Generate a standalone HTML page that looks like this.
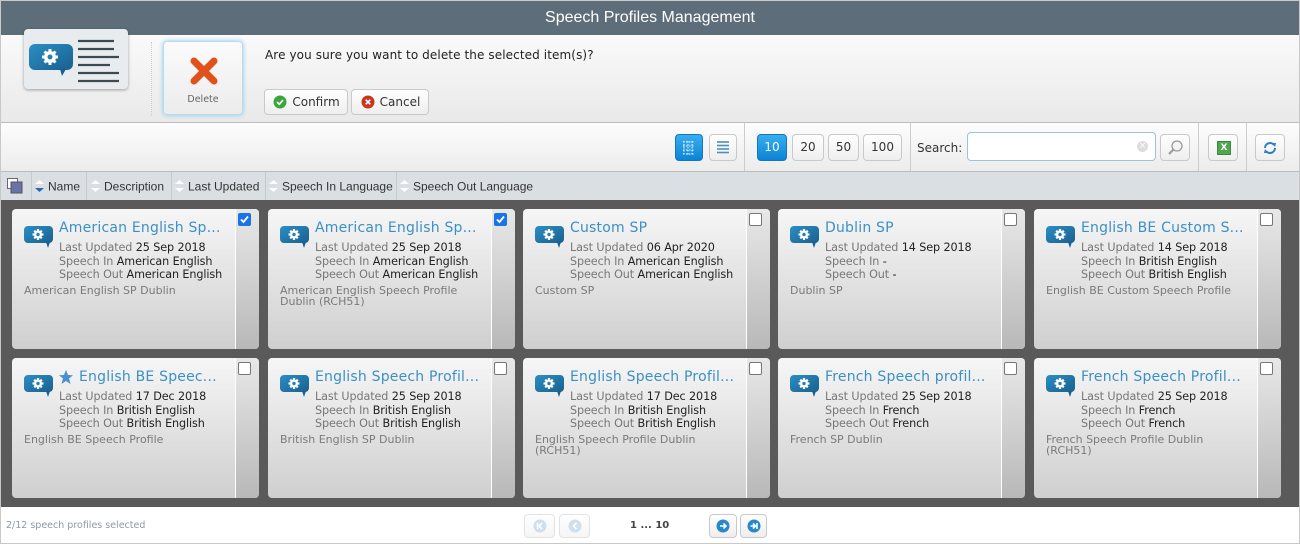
<!DOCTYPE html>
<html><head><meta charset="utf-8"><style>
*{box-sizing:border-box;margin:0;padding:0}
body{width:1300px;height:544px;overflow:hidden;background:#fff;font-family:"DejaVu Sans","Liberation Sans",sans-serif;position:relative}
.abs{position:absolute}
#frame{left:0;top:0;width:1300px;height:544px;border:1px solid #c8c8c8}
#title{left:1px;top:1px;width:1298px;height:34px;background:#5d6e7a;color:#fff;font-family:"Liberation Sans",sans-serif;font-size:16px;text-align:center;line-height:34px}
#hdr{left:1px;top:35px;width:1298px;height:88px;background:linear-gradient(#fafafa,#e9e9e9);border-bottom:1px solid #bdbdbd}
#tb{left:1px;top:123px;width:1298px;height:49px;background:linear-gradient(#fdfdfd,#ececec);border-bottom:1px solid #bbb}
#cols{left:1px;top:172px;width:1298px;height:28px;background:#d9dfe3;font-family:"Liberation Sans",sans-serif;font-size:12px;color:#333}
#grid{left:1px;top:200px;width:1298px;height:307px;background:#5a5a5a}
.btn{position:absolute;border:1px solid #c9c9c9;border-radius:4px;background:linear-gradient(#fff,#eee);font-size:12px;color:#333;text-align:center}
.blue{background:linear-gradient(#38aef0,#0c84d6);border-color:#1577bd;color:#fff}
.card{position:absolute;width:247px;height:140px;border-radius:4px;background:linear-gradient(#f6f6f6,#cfcfcf)}
.strip{position:absolute;right:0;top:0;width:24px;height:140px;border-left:1px solid #fff;border-radius:0 4px 4px 0;background:linear-gradient(#e8e8e8,#b8b8b8)}
.cb{position:absolute;right:8px;top:4px;width:13px;height:13px;border:1px solid #777;border-radius:2px;background:#fff}
.cb.on{background:#1a73e8;border-color:#1a73e8}
.ico{position:absolute;left:12px;top:16px}
.t{position:absolute;left:47px;top:11px;font-size:14px;color:#3b90c6;white-space:nowrap;letter-spacing:.2px}
.d{position:absolute;left:47px;top:32px;font-size:11.2px;line-height:13.5px;color:#777;white-space:nowrap;letter-spacing:-.1px}
.d b{font-weight:normal;color:#222}
.ds{position:absolute;left:12px;top:76px;width:190px;font-size:11px;line-height:11px;color:#7a7a7a}
.sep{position:absolute;top:0;height:28px;width:1px;background:#c4cbcf}
.arr{display:inline-block;vertical-align:middle;margin-right:3px}
</style></head><body>
<div class="abs" id="frame"></div>
<div class="abs" id="title">Speech Profiles Management</div>
<div class="abs" id="hdr">
  <div class="abs" style="left:23px;top:-6px;width:104px;height:60px;border-radius:4px;background:#e9ecee;box-shadow:0 1px 3px rgba(0,0,0,.35)">
    <svg width="104" height="60" style="position:absolute;left:0;top:0"><defs><linearGradient id="g0" x1="0" y1="0" x2="1" y2="1"><stop offset="0" stop-color="#2b8fc4"/><stop offset="1" stop-color="#1a5f8f"/></linearGradient></defs>
    <rect x="5" y="15" width="44" height="26" rx="6" fill="url(#g0)"/><path d="M36 40 L38 47 L42 40Z" fill="#1a5f8f"/>
    <g stroke="#fff" stroke-width="3"><line x1="26" y1="20" x2="26" y2="36"/><line x1="18" y1="28" x2="34" y2="28"/><line x1="20.5" y1="22.5" x2="31.5" y2="33.5"/><line x1="31.5" y1="22.5" x2="20.5" y2="33.5"/></g>
    <circle cx="26" cy="28" r="6" fill="#fff"/><circle cx="26" cy="28" r="2.5" fill="#2680b5"/>
    <g stroke="#3e4a52" stroke-width="2.2"><line x1="54" y1="12" x2="90" y2="12"/><line x1="54" y1="20" x2="90" y2="20"/><line x1="54" y1="28" x2="95" y2="28"/><line x1="54" y1="36" x2="86" y2="36"/><line x1="54" y1="44" x2="95" y2="44"/><line x1="54" y1="52" x2="95" y2="52"/></g></svg>
  </div>
  <div class="abs" style="left:150px;top:7px;width:1px;height:74px;border-left:1px dotted #ccc"></div>
  <div class="abs" style="left:162px;top:6px;width:80px;height:74px;border-radius:4px;background:linear-gradient(#fbfbfb,#ececec);box-shadow:0 0 5px #8cc8ea;border:1px solid #b8dbef">
    <svg width="30" height="30" style="position:absolute;left:25px;top:14px"><g stroke="#e0521c" stroke-width="7" stroke-linecap="round"><line x1="5" y1="5" x2="25" y2="25"/><line x1="25" y1="5" x2="5" y2="25"/></g></svg>
    <div style="position:absolute;left:0;width:78px;top:52px;font-size:9.5px;color:#666;text-align:center">Delete</div>
  </div>
  <div class="abs" style="left:264px;top:13px;font-size:12px;color:#222;letter-spacing:.1px">Are you sure you want to delete the selected item(s)?</div>
  <div class="btn" style="left:263px;top:54px;width:84px;height:26px;line-height:24px;padding-left:20px"><svg width="14" height="14" style="position:absolute;left:8px;top:5px"><circle cx="7" cy="7" r="6.5" fill="#3ca53c"/><path d="M4 7 L6.3 9.3 L10 5" stroke="#fff" stroke-width="1.6" fill="none"/></svg>Confirm</div>
  <div class="btn" style="left:350px;top:54px;width:78px;height:26px;line-height:24px;padding-left:20px"><svg width="14" height="14" style="position:absolute;left:9px;top:5px"><circle cx="7" cy="7" r="6.5" fill="#c8371c"/><path d="M4.7 4.7 L9.3 9.3 M9.3 4.7 L4.7 9.3" stroke="#fff" stroke-width="1.6"/></svg>Cancel</div>
</div>
<div class="abs" id="tb">
  <div class="btn blue" style="left:674px;top:11px;width:28px;height:27px"><svg width="18" height="18" style="margin-top:4px"><g stroke="#fff" stroke-width="1" stroke-dasharray="1.5 1.5"><line x1="3" y1="3" x2="15" y2="3"/><line x1="3" y1="7" x2="15" y2="7"/><line x1="3" y1="11" x2="15" y2="11"/><line x1="3" y1="15" x2="15" y2="15"/><line x1="4" y1="2" x2="4" y2="16"/><line x1="8" y1="2" x2="8" y2="16"/><line x1="12" y1="2" x2="12" y2="16"/></g></svg></div>
  <div class="btn" style="left:708px;top:11px;width:28px;height:27px"><svg width="16" height="16" style="margin-top:5px"><g stroke="#4e8fb8" stroke-width="1.6"><line x1="2" y1="2" x2="14" y2="2"/><line x1="2" y1="5.5" x2="14" y2="5.5"/><line x1="2" y1="9" x2="14" y2="9"/><line x1="2" y1="12.5" x2="14" y2="12.5"/></g></svg></div>
  <div class="abs" style="left:743px;top:0;width:1px;height:48px;background:#ccc"></div>
  <div class="btn blue" style="left:756px;top:11px;width:30px;height:27px;line-height:25px">10</div>
  <div class="btn" style="left:791px;top:11px;width:32px;height:27px;line-height:25px">20</div>
  <div class="btn" style="left:827px;top:11px;width:31px;height:27px;line-height:25px">50</div>
  <div class="btn" style="left:862px;top:11px;width:39px;height:27px;line-height:25px">100</div>
  <div class="abs" style="left:909px;top:0;width:1px;height:48px;background:#ccc"></div>
  <div class="abs" style="left:916px;top:18px;font-size:12px;color:#333">Search:</div>
  <div class="abs" style="left:966px;top:9px;width:189px;height:29px;border:1px solid #9cc3dc;border-radius:4px;background:#fff"><div style="position:absolute;right:7px;top:8px;width:11px;height:11px;border-radius:50%;background:#ddd;color:#fff;font-size:9px;line-height:11px;text-align:center">×</div></div>
  <div class="btn" style="left:1159px;top:11px;width:30px;height:27px"><svg width="18" height="18" style="margin-top:4px"><circle cx="11" cy="7" r="5" stroke="#999" stroke-width="1.3" fill="#f4f4f4"/><line x1="7.5" y1="10.5" x2="3" y2="15" stroke="#999" stroke-width="2"/></svg></div>
  <div class="abs" style="left:1197px;top:0;width:1px;height:48px;background:#ccc"></div>
  <div class="btn" style="left:1207px;top:11px;width:30px;height:27px"><div style="position:absolute;left:8px;top:6px;width:14px;height:14px;background:#4ea64e;border:1px solid #3c8a3c;color:#fff;font-size:9px;line-height:12px;font-weight:bold">X</div></div>
  <div class="abs" style="left:1245px;top:0;width:1px;height:48px;background:#ccc"></div>
  <div class="btn" style="left:1254px;top:11px;width:30px;height:27px"><svg width="16" height="16" style="margin-top:5px"><path d="M3 8 A5 5 0 0 1 12 5" stroke="#2d7fc0" stroke-width="2" fill="none"/><path d="M13 8 A5 5 0 0 1 4 11" stroke="#2d7fc0" stroke-width="2" fill="none"/><path d="M10 3 L14 3 L13 7Z" fill="#2d7fc0"/><path d="M6 13 L2 13 L3 9Z" fill="#2d7fc0"/></svg></div>
</div>
<div class="abs" id="cols">
  <svg width="16" height="16" style="position:absolute;left:6px;top:6px"><rect x="0.5" y="0.5" width="10" height="10" fill="#fff" stroke="#667"/><rect x="4" y="4" width="11" height="11" fill="#6b72a8" stroke="#555"/></svg>
  <div class="sep" style="left:30px"></div>
  <div class="abs" style="left:33px;top:6px;white-space:nowrap"><span class="arr"><svg width="11" height="16"><path d="M1 6 L5.5 2 L10 6Z" fill="#fff"/><path d="M1 10 L5.5 14 L10 10Z" fill="#2a6aa8"/></svg></span>Name</div>
  <div class="sep" style="left:85px"></div>
  <div class="abs" style="left:89px;top:6px;white-space:nowrap"><span class="arr"><svg width="11" height="16"><path d="M1 6 L5.5 2 L10 6Z" fill="#fff"/><path d="M1 10 L5.5 14 L10 10Z" fill="#fff"/></svg></span>Description</div>
  <div class="sep" style="left:170px"></div>
  <div class="abs" style="left:173px;top:6px;white-space:nowrap"><span class="arr"><svg width="11" height="16"><path d="M1 6 L5.5 2 L10 6Z" fill="#fff"/><path d="M1 10 L5.5 14 L10 10Z" fill="#fff"/></svg></span>Last Updated</div>
  <div class="sep" style="left:264px"></div>
  <div class="abs" style="left:267px;top:6px;white-space:nowrap"><span class="arr"><svg width="11" height="16"><path d="M1 6 L5.5 2 L10 6Z" fill="#fff"/><path d="M1 10 L5.5 14 L10 10Z" fill="#fff"/></svg></span>Speech In Language</div>
  <div class="sep" style="left:395px"></div>
  <div class="abs" style="left:398px;top:6px;white-space:nowrap"><span class="arr"><svg width="11" height="16"><path d="M1 6 L5.5 2 L10 6Z" fill="#fff"/><path d="M1 10 L5.5 14 L10 10Z" fill="#fff"/></svg></span>Speech Out Language</div>
</div>
<div class="abs" id="grid"></div>

<svg width="0" height="0" style="position:absolute"><defs>
<linearGradient id="gi" x1="0" y1="0" x2="1" y2="1"><stop offset="0" stop-color="#2b8fc4"/><stop offset="1" stop-color="#1a5f8f"/></linearGradient>
<symbol id="ic" viewBox="0 0 30 24"><rect x="0" y="1" width="29" height="17" rx="4" fill="url(#gi)"/><path d="M22 17 L24 23 L26 17Z" fill="#1a5f8f"/><g stroke="#fff" stroke-width="2.2"><line x1="14" y1="4" x2="14" y2="15"/><line x1="8.5" y1="9.5" x2="19.5" y2="9.5"/><line x1="10.2" y1="5.7" x2="17.8" y2="13.3"/><line x1="17.8" y1="5.7" x2="10.2" y2="13.3"/></g><circle cx="14" cy="9.5" r="4" fill="#fff"/><circle cx="14" cy="9.5" r="1.7" fill="#2680b5"/></symbol>
</defs></svg>

<div class="card" style="left:12px;top:209px"><div class="strip"></div><div class="cb on"><svg width="11" height="11" style="display:block"><path d="M2 5.5 L4.5 8 L9 2.5" stroke="#fff" stroke-width="1.8" fill="none"/></svg></div><svg class="ico" width="30" height="24"><use href="#ic"/></svg><div class="t">American English Sp...</div><div class="d">Last Updated <b>25 Sep 2018</b><br>Speech In <b>American English</b><br>Speech Out <b>American English</b></div><div class="ds">American English SP Dublin</div></div>
<div class="card" style="left:268px;top:209px"><div class="strip"></div><div class="cb on"><svg width="11" height="11" style="display:block"><path d="M2 5.5 L4.5 8 L9 2.5" stroke="#fff" stroke-width="1.8" fill="none"/></svg></div><svg class="ico" width="30" height="24"><use href="#ic"/></svg><div class="t">American English Sp...</div><div class="d">Last Updated <b>25 Sep 2018</b><br>Speech In <b>American English</b><br>Speech Out <b>American English</b></div><div class="ds">American English Speech Profile Dublin (RCH51)</div></div>
<div class="card" style="left:523px;top:209px"><div class="strip"></div><div class="cb"></div><svg class="ico" width="30" height="24"><use href="#ic"/></svg><div class="t">Custom SP</div><div class="d">Last Updated <b>06 Apr 2020</b><br>Speech In <b>American English</b><br>Speech Out <b>American English</b></div><div class="ds">Custom SP</div></div>
<div class="card" style="left:778px;top:209px"><div class="strip"></div><div class="cb"></div><svg class="ico" width="30" height="24"><use href="#ic"/></svg><div class="t">Dublin SP</div><div class="d">Last Updated <b>14 Sep 2018</b><br>Speech In <b>-</b><br>Speech Out <b>-</b></div><div class="ds">Dublin SP</div></div>
<div class="card" style="left:1034px;top:209px"><div class="strip"></div><div class="cb"></div><svg class="ico" width="30" height="24"><use href="#ic"/></svg><div class="t">English BE Custom S...</div><div class="d">Last Updated <b>14 Sep 2018</b><br>Speech In <b>British English</b><br>Speech Out <b>British English</b></div><div class="ds" style="width:215px">English BE Custom Speech Profile</div></div>

<div class="card" style="left:12px;top:358px"><div class="strip"></div><div class="cb"></div><svg class="ico" width="30" height="24"><use href="#ic"/></svg><svg width="16" height="16" style="position:absolute;left:46px;top:11px"><path d="M8 1 L10 6 L15 6.3 L11 9.5 L12.5 15 L8 12 L3.5 15 L5 9.5 L1 6.3 L6 6Z" fill="#4a8fd0"/></svg><div class="t" style="left:67px">English BE Speec...</div><div class="d">Last Updated <b>17 Dec 2018</b><br>Speech In <b>British English</b><br>Speech Out <b>British English</b></div><div class="ds">English BE Speech Profile</div></div>
<div class="card" style="left:268px;top:358px"><div class="strip"></div><div class="cb"></div><svg class="ico" width="30" height="24"><use href="#ic"/></svg><div class="t">English Speech Profil...</div><div class="d">Last Updated <b>25 Sep 2018</b><br>Speech In <b>British English</b><br>Speech Out <b>British English</b></div><div class="ds">British English SP Dublin</div></div>
<div class="card" style="left:523px;top:358px"><div class="strip"></div><div class="cb"></div><svg class="ico" width="30" height="24"><use href="#ic"/></svg><div class="t">English Speech Profil...</div><div class="d">Last Updated <b>17 Dec 2018</b><br>Speech In <b>British English</b><br>Speech Out <b>British English</b></div><div class="ds">English Speech Profile Dublin (RCH51)</div></div>
<div class="card" style="left:778px;top:358px"><div class="strip"></div><div class="cb"></div><svg class="ico" width="30" height="24"><use href="#ic"/></svg><div class="t">French Speech profil...</div><div class="d">Last Updated <b>25 Sep 2018</b><br>Speech In <b>French</b><br>Speech Out <b>French</b></div><div class="ds">French SP Dublin</div></div>
<div class="card" style="left:1034px;top:358px"><div class="strip"></div><div class="cb"></div><svg class="ico" width="30" height="24"><use href="#ic"/></svg><div class="t">French Speech Profil...</div><div class="d">Last Updated <b>25 Sep 2018</b><br>Speech In <b>French</b><br>Speech Out <b>French</b></div><div class="ds">French Speech Profile Dublin (RCH51)</div></div>

<div class="abs" style="left:6px;top:520px;font-size:9.5px;color:#8a9aa8">2/12 speech profiles selected</div>
<div class="btn" style="left:524px;top:514px;width:31px;height:24px;opacity:.5"><svg width="14" height="14" style="margin-top:4px"><circle cx="7" cy="7" r="6.5" fill="#9cc3de"/><path d="M9 4 L6 7 L9 10 M4.5 4 V10" stroke="#fff" stroke-width="1.6" fill="none"/></svg></div>
<div class="btn" style="left:559px;top:514px;width:31px;height:24px;opacity:.5"><svg width="14" height="14" style="margin-top:4px"><circle cx="7" cy="7" r="6.5" fill="#9cc3de"/><path d="M8.5 4 L5.5 7 L8.5 10" stroke="#fff" stroke-width="1.6" fill="none"/></svg></div>
<div class="abs" style="left:630px;top:520px;font-size:10px;font-weight:bold;color:#444">1 ... 10</div>
<div class="btn" style="left:709px;top:514px;width:28px;height:24px"><svg width="14" height="14" style="margin-top:4px"><circle cx="7" cy="7" r="6.5" fill="#2a88c9"/><path d="M4 7 H10 M7.5 4.5 L10 7 L7.5 9.5" stroke="#fff" stroke-width="1.6" fill="none"/></svg></div>
<div class="btn" style="left:740px;top:514px;width:27px;height:24px"><svg width="14" height="14" style="margin-top:4px"><circle cx="7" cy="7" r="6.5" fill="#2a88c9"/><path d="M3.5 7 H8 M6 4.5 L8.5 7 L6 9.5 M10 4 V10" stroke="#fff" stroke-width="1.6" fill="none"/></svg></div>
</body></html>
